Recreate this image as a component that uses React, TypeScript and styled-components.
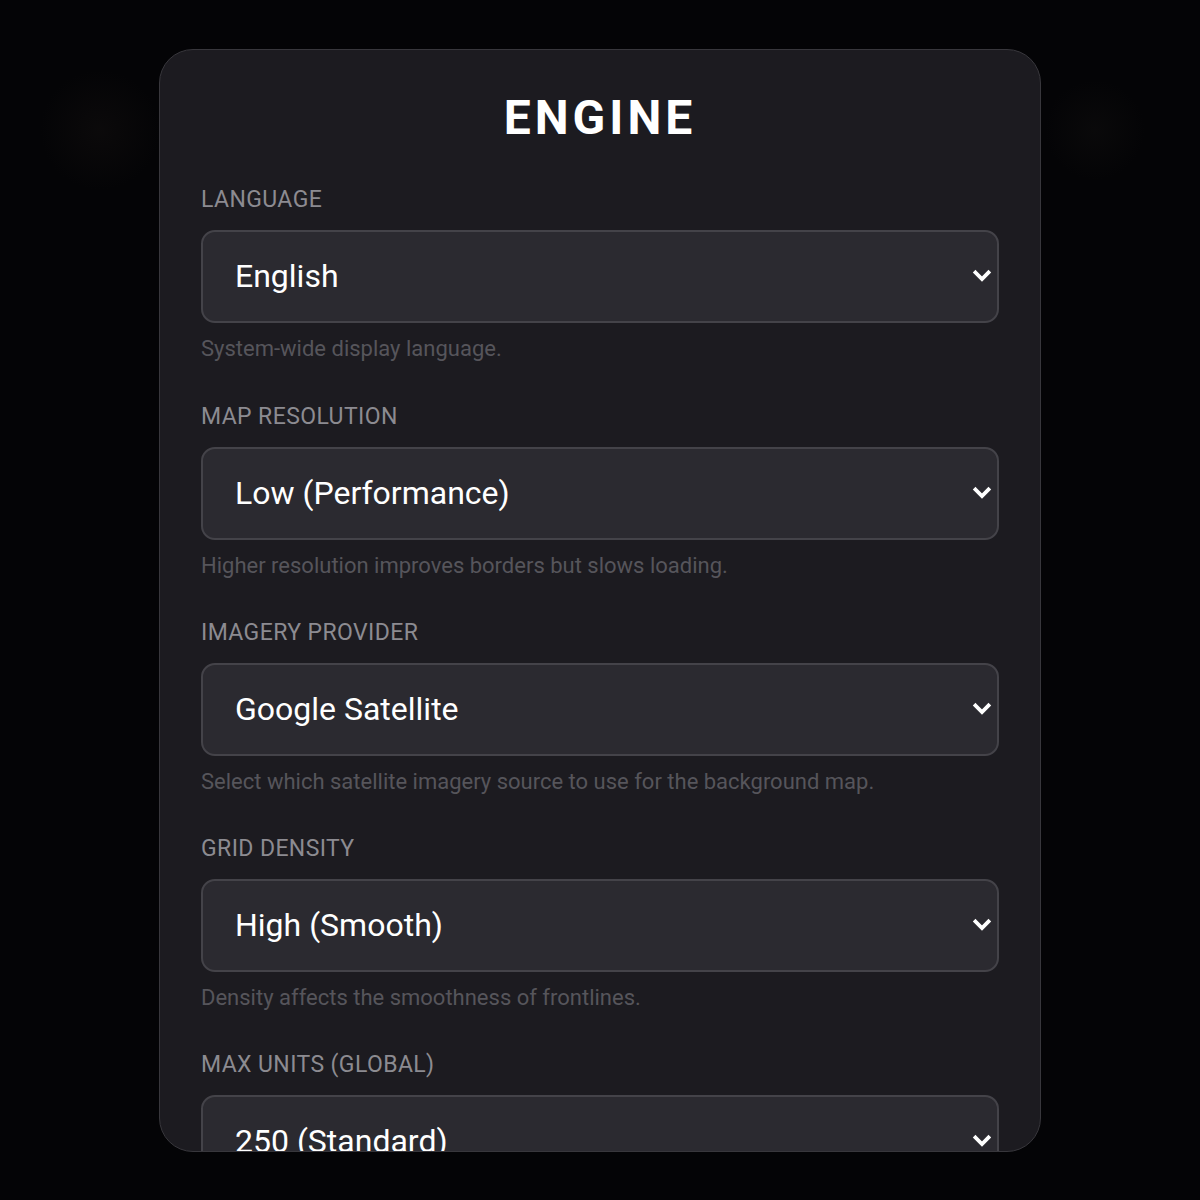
import React from 'react';
import styled, { createGlobalStyle } from 'styled-components';

const GlobalStyle = createGlobalStyle`
  html, body {
    margin: 0;
    padding: 0;
    background: #040406;
  }
  * {
    box-sizing: border-box;
  }
`

const Screen = styled.div`
  width: 1200px;
  height: 1200px;
  display: flex;
  align-items: center;
  justify-content: center;
  background:
    radial-gradient(circle at 100px 130px, rgba(40, 32, 28, 0.2), transparent 60px),
    radial-gradient(circle at 1095px 130px, rgba(40, 36, 32, 0.16), transparent 50px),
    #040406;
  font-family: Roboto, "Liberation Sans", sans-serif;
`

const Panel = styled.div`
  width: 882px;
  height: 1103px;
  background: #1c1b20;
  border: 1px solid #38373c;
  border-radius: 34px;
  padding: 40px 41px;
  overflow: hidden;
  display: flex;
  flex-direction: column;
`

const Title = styled.h1`
  margin: 0 0 41px;
  text-align: center;
  color: #ffffff;
  font-size: 48px;
  font-weight: 700;
  letter-spacing: 4px;
  line-height: 56px;
`

const Field = styled.div`
  display: flex;
  flex-direction: column;
  flex-shrink: 0;
  margin-bottom: 41px;
  &:first-of-type {
    margin-bottom: 42px;
  }
`

const Label = styled.label`
  color: #8c8b91;
  font-size: 23px;
  letter-spacing: 0.4px;
  line-height: 26px;
  margin-bottom: 17px;
`

const SelectWrap = styled.div`
  position: relative;
  height: 93px;
`

const Select = styled.div`
  height: 93px;
  background: #2b2a30;
  border: 2px solid #444349;
  border-radius: 14px;
  display: flex;
  align-items: center;
  padding: 0 60px 0 32px;
  color: #ffffff;
  font-size: 32px;
`

const Chevron = styled.svg`
  position: absolute;
  right: 7px;
  top: 50%;
  transform: translateY(-50%);
  width: 20px;
  height: 14px;
`

const Hint = styled.div`
  color: #56555b;
  font-size: 22px;
  line-height: 26px;
  margin-top: 13px;
`

const fields = [
  { label: 'LANGUAGE', value: 'English', hint: 'System-wide display language.' },
  { label: 'MAP RESOLUTION', value: 'Low (Performance)', hint: 'Higher resolution improves borders but slows loading.' },
  { label: 'IMAGERY PROVIDER', value: 'Google Satellite', hint: 'Select which satellite imagery source to use for the background map.' },
  { label: 'GRID DENSITY', value: 'High (Smooth)', hint: 'Density affects the smoothness of frontlines.' },
  { label: 'MAX UNITS (GLOBAL)', value: '250 (Standard)', hint: 'Limits the total number of units rendered on the map.' },
]

const SettingField: React.FC<{ label: string; value: string; hint: string }> = (props) => {
  return (
    <Field>
      <Label>{props.label}</Label>
      <SelectWrap>
        <Select>{props.value}</Select>
        <Chevron viewBox="0 0 20 14">
          <path d="M3.5 3.5 L10 10 L16.5 3.5" fill="none" stroke="#ffffff" strokeWidth="3.8" strokeLinecap="square" strokeLinejoin="miter" />
        </Chevron>
      </SelectWrap>
      <Hint>{props.hint}</Hint>
    </Field>
  )
}

export default function App() {
  return (
    <>
      <GlobalStyle />
      <Screen>
        <Panel>
          <Title>ENGINE</Title>
          {fields.map((f) => (
            <SettingField key={f.label} label={f.label} value={f.value} hint={f.hint} />
          ))}
        </Panel>
      </Screen>
    </>
  )
}
